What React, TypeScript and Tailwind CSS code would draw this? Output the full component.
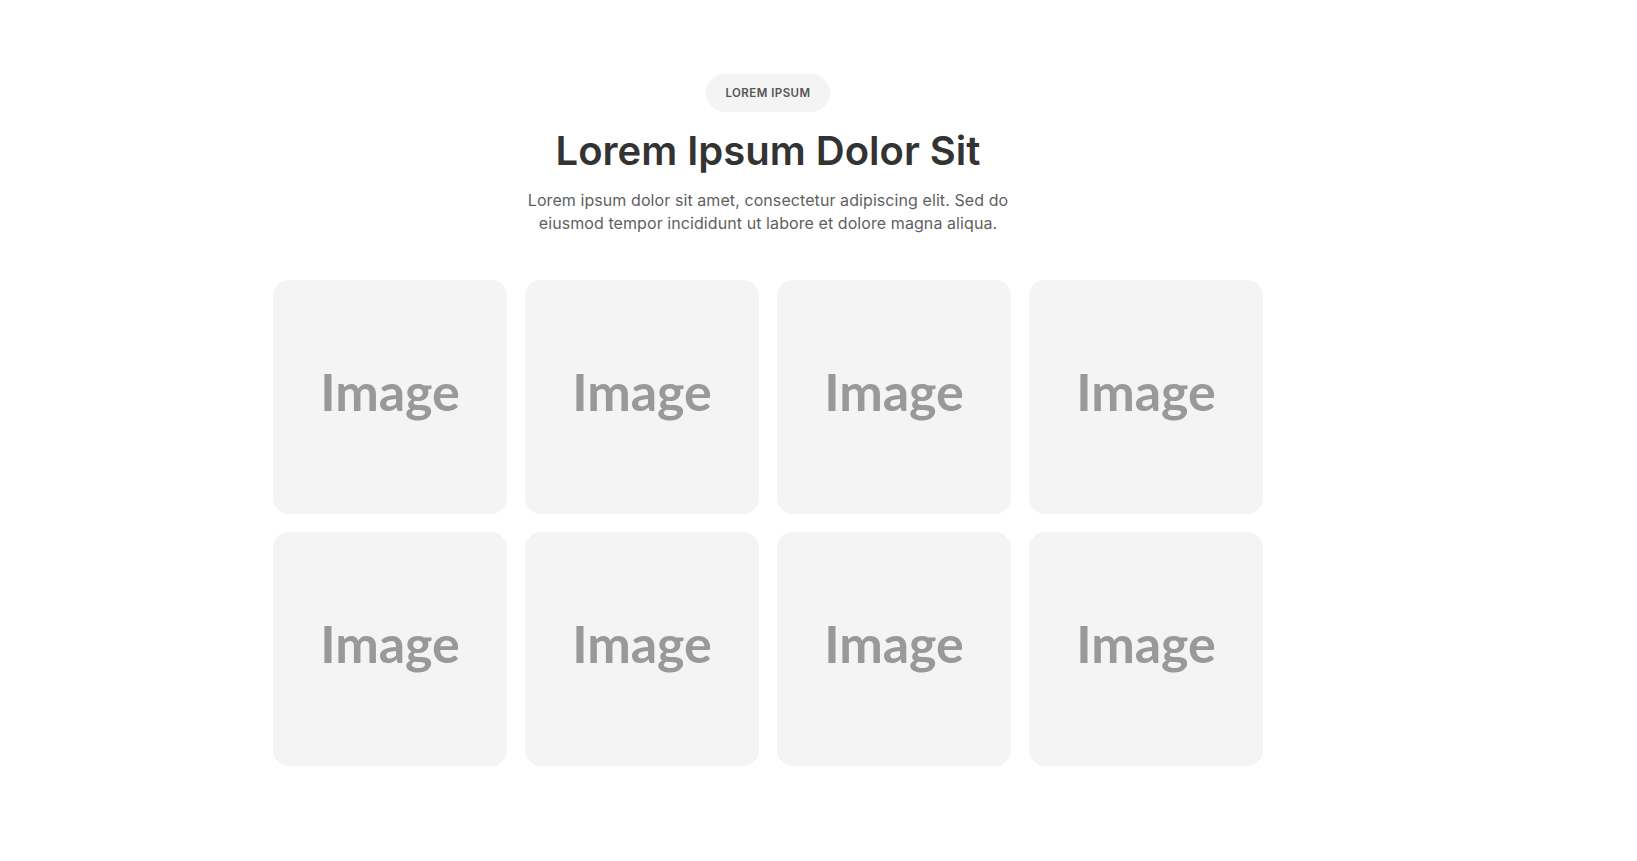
import React from "react";

export default function App() {
  const items = Array.from({ length: 8 });
  return (
    <div className="min-h-screen bg-white pt-[74px] pl-[273px]" style={{ fontFamily: "Inter, 'Noto Sans', sans-serif" }}>
      <div className="w-[990px] flex flex-col items-center">
        <span className="rounded-full bg-[#f4f4f4] px-[19px] py-[11px] text-[11.5px] leading-4 font-semibold tracking-[0.04em] text-[#555]">
          LOREM IPSUM
        </span>
        <h1 className="mt-[19px] text-[40px] leading-10 font-semibold text-[#333]">
          Lorem Ipsum Dolor Sit
        </h1>
        <p className="mt-[18px] max-w-[500px] text-center text-base leading-[23px] tracking-[0.005em] text-[#5f5f5f]">
          Lorem ipsum dolor sit amet, consectetur adipiscing elit. Sed do eiusmod tempor incididunt ut labore et dolore magna aliqua.
        </p>
        <div className="mt-[45px] grid grid-cols-4 gap-[18px] w-full">
          {items.map((_, i) => (
            <div
              key={i}
              className="h-[234px] rounded-2xl bg-[#f4f4f4] flex items-center justify-center pb-[13px]"
            >
              <span
                className="text-[52px] font-bold text-[#999] leading-none"
                style={{ fontFamily: "Lato, sans-serif" }}
              >
                Image
              </span>
            </div>
          ))}
        </div>
      </div>
    </div>
  );
}
